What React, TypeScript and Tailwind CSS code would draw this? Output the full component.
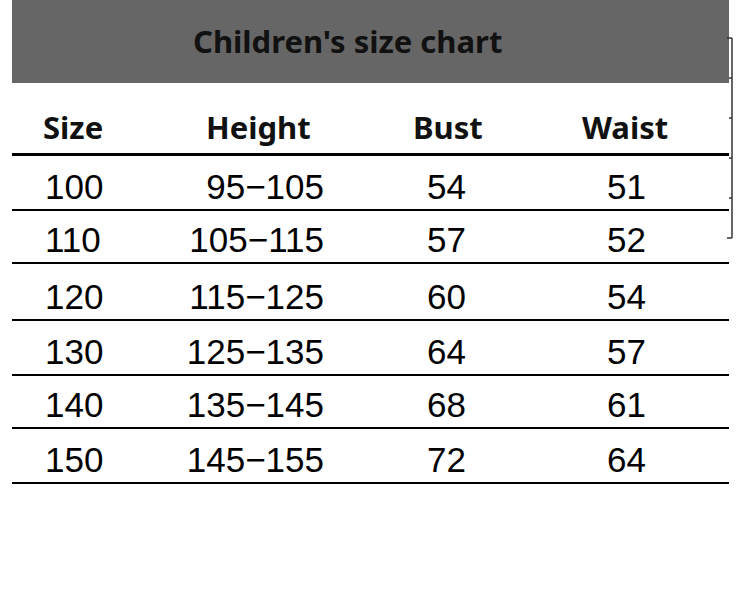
const rows = [
  { size: '100', height: '95−105', bust: '54', waist: '51', h: 'h-[55px]' },
  { size: '110', height: '105−115', bust: '57', waist: '52', h: 'h-[53px]' },
  { size: '120', height: '115−125', bust: '60', waist: '54', h: 'h-[57px]' },
  { size: '130', height: '125−135', bust: '64', waist: '57', h: 'h-[55px]' },
  { size: '140', height: '135−145', bust: '68', waist: '61', h: 'h-[53px]' },
  { size: '150', height: '145−155', bust: '72', waist: '64', h: 'h-[55px]' },
];

const cols = 'grid grid-cols-[168px_160px_220px_169px]';

export default function App() {
  return (
    <div className="relative w-[750px] h-[595px] bg-white">
      <div className="ml-[12px] w-[717px]">
        <div className="h-[83px] bg-[#666666] flex items-center pl-[181px] pb-[1px]">
          <h1 className="font-['Noto_Sans',sans-serif] font-bold text-[31px] leading-none text-[#111111]">
            Children's size chart
          </h1>
        </div>

        <div
          className={`${cols} h-[73px] items-end pb-[10px] border-b-[3px] border-black font-['Noto_Sans',sans-serif] font-bold text-[31px] leading-none text-[#111111]`}
        >
          <div className="pl-[31px]">Size</div>
          <div className="pl-[26px]">Height</div>
          <div className="pl-[73px]">Bust</div>
          <div className="pl-[22px]">Waist</div>
        </div>

        {rows.map((r) => (
          <div
            key={r.size}
            className={`${cols} ${r.h} items-end pb-[5px] border-b-2 border-black font-['Liberation_Sans',Arial,sans-serif] text-[35px] leading-none text-black`}
          >
            <div className="pl-[33px]">{r.size}</div>
            <div className="text-right pr-[16px]">{r.height}</div>
            <div className="pl-[87px]">{r.bust}</div>
            <div className="pl-[47px]">{r.waist}</div>
          </div>
        ))}
      </div>

      <svg
        className="absolute left-[724px] top-[36px]"
        width="12"
        height="205"
        viewBox="0 0 12 205"
      >
        <g stroke="#333" strokeWidth="1.5" fill="none">
          <path d="M8 2 V202" />
          <path d="M3 2 H8" />
          <path d="M3 202 H8" />
          <path d="M5 42 H8" />
          <path d="M5 82 H8" />
          <path d="M5 122 H8" />
          <path d="M5 162 H8" />
        </g>
      </svg>
    </div>
  );
}
